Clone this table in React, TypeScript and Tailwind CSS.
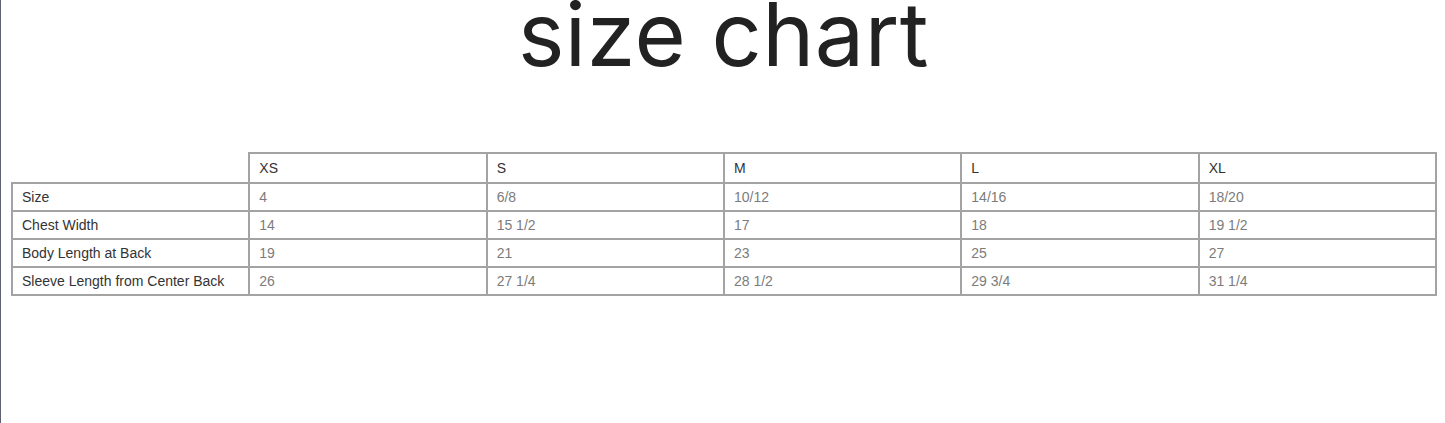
const SIZES = ["XS", "S", "M", "L", "XL"]

const ROWS: { label: string; values: string[] }[] = [
  { label: "Size", values: ["4", "6/8", "10/12", "14/16", "18/20"] },
  { label: "Chest Width", values: ["14", "15 1/2", "17", "18", "19 1/2"] },
  { label: "Body Length at Back", values: ["19", "21", "23", "25", "27"] },
  { label: "Sleeve Length from Center Back", values: ["26", "27 1/4", "28 1/2", "29 3/4", "31 1/4"] },
]

export default function App() {
  return (
    <main className="w-[1445px] h-[423px] bg-white border-l border-[#5d6172] overflow-hidden">
      <h1 className="text-center text-[88px] leading-[64px] text-[#222] font-['Inter',sans-serif] font-normal tracking-[0.5px] mt-[2px] pl-[1px]">
        size chart
      </h1>
      <table className="ml-[10px] mt-[86px] w-[1426px] table-fixed border-collapse font-['Liberation_Sans',Arial,sans-serif] text-[14px]">
        <thead>
          <tr className="h-[30px]">
            <th className="border-0" />
            {SIZES.map((s) => (
              <th key={s} className="border-2 border-[#a3a3a3] text-left font-normal pl-[9px] text-[#333]">
                {s}
              </th>
            ))}
          </tr>
        </thead>
        <tbody>
          {ROWS.map((row) => (
            <tr key={row.label} className="h-[28px]">
              <td className="border-2 border-[#a3a3a3] pl-[9px] text-[#333]">{row.label}</td>
              {row.values.map((v, i) => (
                <td key={i} className="border-2 border-[#a3a3a3] pl-[9px] text-[#7c7c7c]">
                  {v}
                </td>
              ))}
            </tr>
          ))}
        </tbody>
      </table>
    </main>
  )
}
